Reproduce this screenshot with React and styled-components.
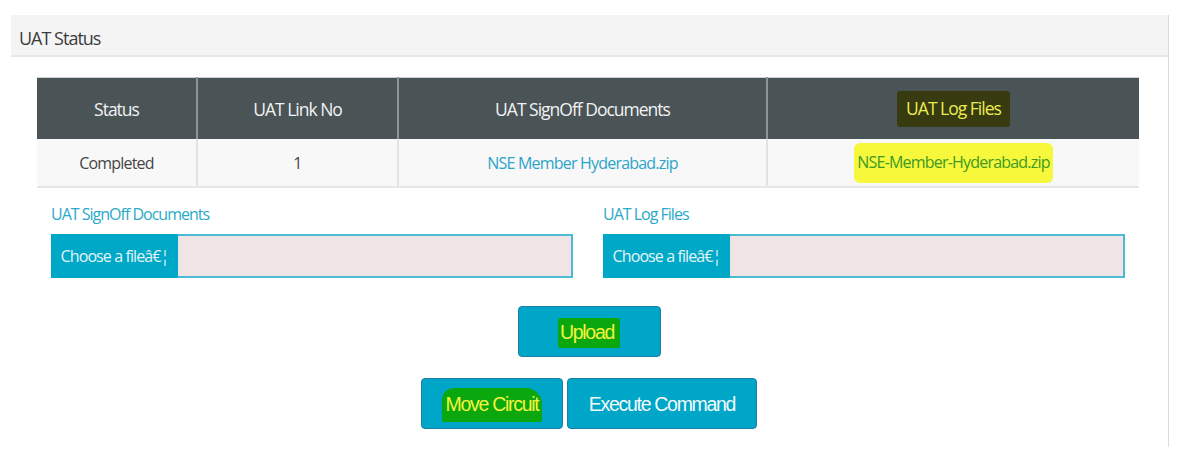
import React from 'react';
import styled, { createGlobalStyle } from 'styled-components';

const GlobalStyle = createGlobalStyle`
	html, body {
		margin: 0;
		padding: 0;
		background: #fff;
	}
	body {
		font-family: 'Open Sans', 'Noto Sans', sans-serif;
	}
`;

const rows = [
	{
		status: 'Completed',
		linkNo: '1',
		signOff: 'NSE Member Hyderabad.zip',
		logFile: 'NSE-Member-Hyderabad.zip',
	},
];

function FileField({ label }) {
	return (
		<Field>
			<FieldLabel>{label}</FieldLabel>
			<FileBox>
				<FileButton>Choose a fileâ€¦</FileButton>
				<FileName />
			</FileBox>
		</Field>
	);
}

function App() {
	return (
		<>
			<GlobalStyle />
			<Page>
				<Panel>
					<PanelHeader>UAT Status</PanelHeader>
					<PanelBody>
						<Table>
							<thead>
								<tr>
									<Th width={159}>Status</Th>
									<Th width={199}>UAT Link No</Th>
									<Th width={367}>UAT SignOff Documents</Th>
									<Th>
										<HeadMark>UAT Log Files</HeadMark>
									</Th>
								</tr>
							</thead>
							<tbody>
								{rows.map((row) => (
									<tr key={row.linkNo}>
										<Td>{row.status}</Td>
										<Td>{row.linkNo}</Td>
										<Td>
											<FileLink>{row.signOff}</FileLink>
										</Td>
										<Td>
											<LinkMark>{row.logFile}</LinkMark>
										</Td>
									</tr>
								))}
							</tbody>
						</Table>

						<UploadForm>
							<FileField label="UAT SignOff Documents" />
							<FileField label="UAT Log Files" />
						</UploadForm>

						<ButtonRow>
							<ActionButton width={143}>
								<ButtonMark>Upload</ButtonMark>
							</ActionButton>
						</ButtonRow>
						<ButtonRow gap={4}>
							<ActionButton width={142}>
								<ButtonMark brush>Move Circuit</ButtonMark>
							</ActionButton>
							<ActionButton width={190}>Execute Command</ActionButton>
						</ButtonRow>
					</PanelBody>
				</Panel>
			</Page>
		</>
	);
}

const Page = styled.div`
	padding: 15px 0 0 11px;
	width: 1180px;
	height: 458px;
	box-sizing: border-box;
`;

const Panel = styled.section`
	width: 1158px;
	height: 432px;
	border-right: 1px solid #dcdcdc;
	box-sizing: border-box;
`;

const PanelHeader = styled.header`
	height: 42px;
	box-sizing: border-box;
	display: flex;
	align-items: center;
	padding: 6px 0 0 8px;
	background: #f4f4f4;
	border-bottom: 2px solid #e8e8e8;
	font-size: 18px;
	letter-spacing: -1px;
	color: #3c3c3c;
`;

const PanelBody = styled.div`
	padding: 20px 29px 0 26px;
`;

const Table = styled.table`
	width: 1102px;
	border-collapse: collapse;
	table-layout: fixed;
`;

const Th = styled.th`
	width: ${(p) => (p.width ? `${p.width}px` : 'auto')};
	height: 61px;
	padding: 0;
	background: #4a5356;
	color: #f2f2f2;
	font-weight: 400;
	font-size: 17.5px;
	letter-spacing: -1px;
	text-align: center;
	border-left: 2px solid #8c9496;
	border-top: 1px solid #d0d0d0;
	&:first-child {
		border-left: none;
	}
`;

const Td = styled.td`
	height: 47px;
	padding: 0;
	background: #f8f8f8;
	color: #454545;
	font-size: 16px;
	letter-spacing: -0.8px;
	text-align: center;
	border-left: 2px solid #e3e3e3;
	border-bottom: 2px solid #e6e6e6;
	&:first-child {
		border-left: none;
	}
`;

const HeadMark = styled.span`
	display: inline-block;
	padding: 5px 9px 7px;
	background: #383a10;
	color: #ecec52;
	border-radius: 3px;
`;

const FileLink = styled.span`
	color: #2ba4c8;
`;

const LinkMark = styled.span`
	display: inline-block;
	padding: 8px 3px 10px;
	background: #f7f73c;
	color: #3c9a24;
	border-radius: 6px;
`;

const UploadForm = styled.div`
	display: grid;
	grid-template-columns: 522px 522px;
	column-gap: 30px;
	padding: 15px 14px 0;
`;

const Field = styled.div`
	display: flex;
	flex-direction: column;
`;

const FieldLabel = styled.label`
	font-size: 16px;
	letter-spacing: -1px;
	color: #2aa9c9;
	line-height: 22px;
	margin-bottom: 9px;
`;

const FileBox = styled.div`
	display: flex;
	height: 44px;
	box-sizing: border-box;
	border: 2px solid #4bbcd4;
	border-left: none;
`;

const FileButton = styled.span`
	width: 127px;
	display: flex;
	align-items: center;
	justify-content: center;
	background: #00a8c7;
	color: #e4f4f8;
	font-size: 16px;
	letter-spacing: -0.9px;
	margin-top: -2px;
	margin-bottom: -2px;
`;

const FileName = styled.span`
	flex: 1;
	background: #f0e4e4;
`;

const ButtonRow = styled.div`
	display: flex;
	justify-content: center;
	gap: ${(p) => p.gap || 0}px;
	padding-left: 2px;
	margin-top: ${(p) => (p.gap ? 21 : 28)}px;
`;

const ActionButton = styled.button`
	width: ${(p) => p.width}px;
	height: 51px;
	display: flex;
	align-items: center;
	justify-content: center;
	padding: 2px 0 0;
	background: #00a6c7;
	border: 1px solid #1d7fa6;
	border-radius: 4px;
	color: #f4fafc;
	font-family: 'Liberation Sans', Arial, sans-serif;
	font-size: 19.5px;
	letter-spacing: -1.3px;
	cursor: pointer;
`;

const ButtonMark = styled.span`
	display: inline-block;
	padding: ${(p) => (p.brush ? '5px 4px 6px' : '3px 6px 4px 2px')};
	background: #0aa70f;
	color: #f4f43c;
	border-radius: ${(p) => (p.brush ? '12px 16px 2px 2px' : '2px')};
`;

export default App;
